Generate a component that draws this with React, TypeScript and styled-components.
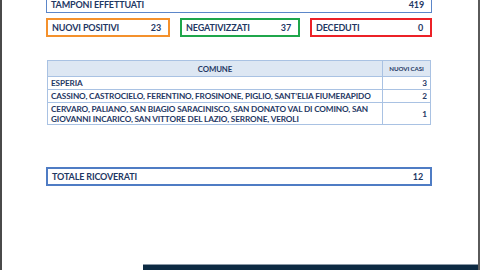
import styled, { createGlobalStyle } from "styled-components";

const GlobalStyle = createGlobalStyle`
  html, body {
    margin: 0;
    padding: 0;
    background: #ffffff;
  }
`;

const Frame = styled.div`
  width: 480px;
  height: 270px;
  box-sizing: border-box;
  border-left: 2px solid #4a4a4a;
  border-right: 2px solid #5a5a5a;
  background: #ffffff;
  display: flex;
  flex-direction: column;
  overflow: hidden;
  font-family: Lato, "Open Sans", sans-serif;
  font-weight: 700;
  color: #1f3864;
`;

const Content = styled.div`
  width: 386px;
  margin-left: 44px;
  margin-top: -5px;
  display: flex;
  flex-direction: column;
`;

const StatBox = styled.div<{ $color: string; $width?: number; $thin?: boolean }>`
  box-sizing: border-box;
  width: ${(p) => (p.$width ? `${p.$width}px` : "100%")};
  height: ${(p) => (p.$thin ? "18px" : "19px")};
  border: ${(p) => (p.$thin ? "1.5px" : "2px")} solid ${(p) => p.$color};
  display: flex;
  align-items: center;
  justify-content: space-between;
  padding: 0 7px 0 4px;
  font-size: 9px;
  letter-spacing: -0.15px;
`;

const StatRow = styled.div`
  display: flex;
  gap: 10px;
  margin-top: 5px;
`;

const Table = styled.table`
  margin-top: 23px;
  margin-left: 1px;
  width: 384px;
  border-collapse: collapse;
  font-size: 8.2px;
  letter-spacing: -0.12px;
  border: 1px solid #9fbadf;

  td,
  th {
    border: 1px solid #a9c2e3;
    padding: 0 3px;
    line-height: 10px;
  }
`;

const HeadCell = styled.th<{ $small?: boolean }>`
  background: #dde7f3;
  height: 15px;
  text-align: center;
  font-weight: 700;
  font-size: ${(p) => (p.$small ? "6.2px" : "7.8px")};
  width: ${(p) => (p.$small ? "41px" : "auto")};
`;

const Cell = styled.td<{ $num?: boolean; $tall?: boolean }>`
  text-align: ${(p) => (p.$num ? "right" : "left")};
  height: ${(p) => (p.$tall ? "21px" : "12px")};
  vertical-align: middle;
`;

const TotalBox = styled(StatBox)`
  margin-top: 42px;
`;

const Spacer = styled.div`
  flex: 1;
`;

const FooterBar = styled.div`
  margin-left: 141px;
  height: 5px;
  background: #0c2a42;
  border-top: 1px solid #8a98a6;
`;

const rows = [
  { comune: "ESPERIA", casi: 3 },
  {
    comune:
      "CASSINO, CASTROCIELO, FERENTINO, FROSINONE, PIGLIO, SANT’ELIA FIUMERAPIDO",
    casi: 2,
  },
  {
    comune:
      "CERVARO, PALIANO, SAN BIAGIO SARACINISCO, SAN DONATO VAL DI COMINO, SAN GIOVANNI INCARICO, SAN VITTORE DEL LAZIO, SERRONE, VEROLI",
    casi: 1,
    tall: true,
  },
];

export default function App() {
  return (
    <>
      <GlobalStyle />
      <Frame>
        <Content>
          <StatBox $color="#5b86c9" $thin>
            <span>TAMPONI EFFETTUATI</span>
            <span>419</span>
          </StatBox>
          <StatRow>
            <StatBox $color="#f4912c" $width={124}>
              <span>NUOVI POSITIVI</span>
              <span>23</span>
            </StatBox>
            <StatBox $color="#1fa64b" $width={120}>
              <span>NEGATIVIZZATI</span>
              <span>37</span>
            </StatBox>
            <StatBox $color="#ec2127" $width={122}>
              <span>DECEDUTI</span>
              <span>0</span>
            </StatBox>
          </StatRow>
          <Table>
            <thead>
              <tr>
                <HeadCell>COMUNE</HeadCell>
                <HeadCell $small>NUOVI CASI</HeadCell>
              </tr>
            </thead>
            <tbody>
              {rows.map((r) => (
                <tr key={r.casi}>
                  <Cell $tall={r.tall}>{r.comune}</Cell>
                  <Cell $num $tall={r.tall}>
                    {r.casi}
                  </Cell>
                </tr>
              ))}
            </tbody>
          </Table>
          <TotalBox $color="#4f7cc4">
            <span>TOTALE RICOVERATI</span>
            <span>12</span>
          </TotalBox>
        </Content>
        <Spacer />
        <FooterBar />
      </Frame>
    </>
  );
}
